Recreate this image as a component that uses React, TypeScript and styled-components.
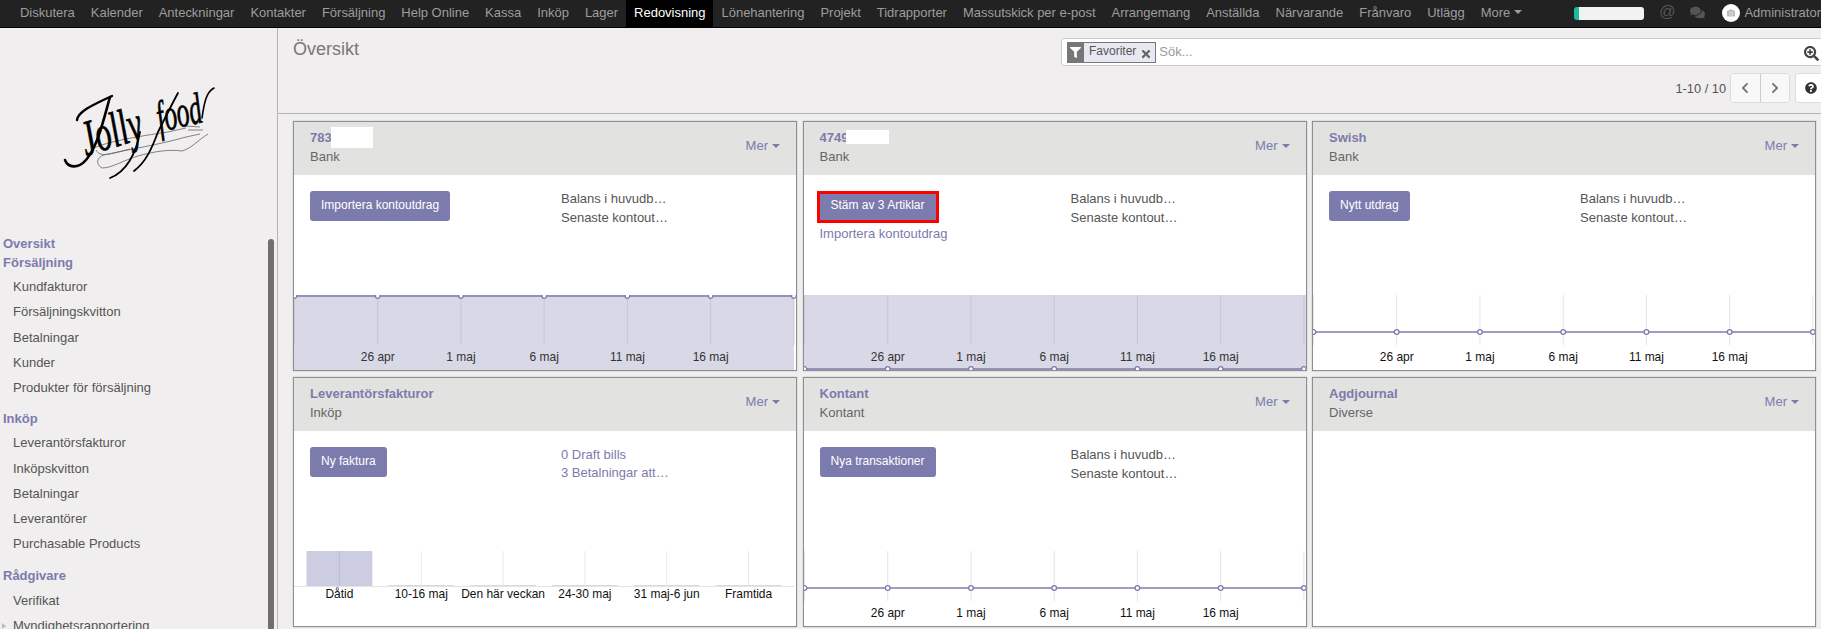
import React from "react";
import styled, { createGlobalStyle } from "styled-components";
import { FaComments, FaFilter, FaTimes, FaSearchPlus, FaChevronLeft, FaChevronRight, FaQuestionCircle, FaCamera } from "react-icons/fa";

const PURPLE = "#7c7bad";

const Global = createGlobalStyle`
  html, body { margin: 0; padding: 0; width: 1821px; height: 629px; overflow: hidden; background: #f0eeee; }
  body { font-family: "Liberation Sans", Arial, sans-serif; font-size: 13px; color: #4c4c4c; }
  * { box-sizing: border-box; }
`;

const Page = styled.div`
  width: 1821px;
  height: 629px;
  display: flex;
  flex-direction: column;
  overflow: hidden;
`;

const TopBar = styled.nav`
  flex: 0 0 28px;
  display: flex;
  align-items: stretch;
  padding-left: 12px;
  background: #222;
  border-bottom: 1px solid #000;
`;

const NavItem = styled.div<{ $active?: boolean }>`
  display: flex;
  align-items: center;
  padding: 0 8px 3px;
  white-space: nowrap;
  letter-spacing: -0.015px;
  color: ${(p) => (p.$active ? "#fff" : "#9d9d9d")};
  background: ${(p) => (p.$active ? "#000" : "transparent")};
`;

const Caret = styled.span<{ $color: string }>`
  display: inline-block;
  margin-left: 4px;
  vertical-align: 2px;
  border-top: 4px solid ${(p) => p.$color};
  border-left: 4px solid transparent;
  border-right: 4px solid transparent;
`;

const NavRight = styled.div`
  margin-left: auto;
  display: flex;
  align-items: center;
  padding-bottom: 3px;
  color: #9d9d9d;
  white-space: nowrap;
`;

const Progress = styled.div`
  width: 70px;
  height: 13px;
  margin-top: 3px;
  border-radius: 3px;
  overflow: hidden;
  background: #f2f2f2;
  border-left: 5px solid #1abc9c;
`;

const AtSign = styled.span`
  margin-left: 15px;
  font-size: 16px;
  color: #555;
`;

const Chat = styled.span`
  display: flex;
  margin-left: 15px;
  font-size: 15px;
  color: #555;
`;

const Avatar = styled.span`
  width: 18px;
  height: 18px;
  margin-left: 17px;
  margin-right: 4px;
  margin-top: 2px;
  border-radius: 50%;
  background: #fff;
  display: flex;
  align-items: center;
  justify-content: center;
  font-size: 8px;
  color: #bbb;
`;

const Main = styled.div`
  flex: 1;
  min-height: 0;
  display: flex;
`;

const Sidebar = styled.aside`
  position: relative;
  flex: 0 0 278px;
  border-right: 1px solid #b5b5b5;
  background: #f0eeee;
  overflow: hidden;
`;

const LogoBox = styled.div`
  height: 205px;
  padding: 42px 0 0 40px;
`;

const ScrollThumb = styled.div`
  position: absolute;
  left: 268px;
  top: 211px;
  bottom: -10px;
  width: 6px;
  border-radius: 3px 3px 0 0;
  background: #6f6f6f;
`;

const MenuGroup = styled.div<{ $gap?: number }>`
  height: 20px;
  line-height: 20px;
  margin-top: ${(p) => p.$gap ?? 0}px;
  padding-left: 3px;
  font-weight: bold;
  color: ${PURPLE};
`;

const MenuList = styled.div<{ $lead?: number }>`
  margin-top: ${(p) => p.$lead ?? 2}px;
`;

const MenuItem = styled.div<{ $arrow?: boolean }>`
  position: relative;
  height: 25.25px;
  line-height: 25.25px;
  padding-left: 13px;
  color: #555;
  white-space: nowrap;
  &::before {
    content: "";
    display: ${(p) => (p.$arrow ? "block" : "none")};
    position: absolute;
    left: 2px;
    top: 10px;
    border-left: 4px solid #bbb;
    border-top: 3px solid transparent;
    border-bottom: 3px solid transparent;
  }
`;

const Content = styled.main`
  flex: 1;
  min-width: 0;
  display: flex;
  flex-direction: column;
`;

const ControlPanel = styled.header`
  flex: 0 0 86px;
  display: flex;
  padding: 10px 0 0 15px;
  border-bottom: 1px solid #b5b5b5;
`;

const PageTitle = styled.h1`
  flex: 0 0 768px;
  margin: 0;
  font-size: 18px;
  font-weight: normal;
  line-height: 22px;
  color: #777;
`;

const PanelTools = styled.div`
  flex: 0 0 766px;
`;

const SearchBox = styled.div`
  height: 28px;
  display: flex;
  align-items: center;
  padding: 0 7px 0 5px;
  background: #fff;
  border: 1px solid #ccc;
  border-radius: 3px 0 0 3px;
`;

const Facet = styled.div`
  display: flex;
  height: 21px;
  border: 1px solid #777;
  background: #e8e8f2;
  font-size: 12px;
  color: #555;
`;

const FacetIcon = styled.span`
  width: 17px;
  margin: -1px 0 -1px -1px;
  display: flex;
  align-items: center;
  justify-content: center;
  background: #777;
  color: #fff;
  font-size: 11px;
`;

const FacetLabel = styled.span`
  padding: 1px 0 0 5px;
  line-height: 14px;
`;

const FacetClose = styled.span`
  display: flex;
  align-items: center;
  padding: 3px 3px 0 4px;
  font-size: 12px;
  color: #666;
`;

const SearchHint = styled.span`
  flex: 1;
  padding: 0 0 2px 3px;
  color: #999;
`;

const SearchGlyph = styled.span`
  display: flex;
  margin-top: 3px;
  font-size: 15px;
  color: #444;
`;

const PagerRow = styled.div`
  display: flex;
  justify-content: flex-end;
  align-items: center;
  margin-top: 7px;
  height: 30px;
`;

const PagerText = styled.span`
  margin-right: 4px;
  font-size: 12.8px;
  color: #555;
`;

const PagerGroup = styled.div`
  display: flex;
  height: 30px;
  width: 60px;
  border: 1px solid #ddd;
  border-radius: 3px;
  background: #f8f8f8;
`;

const PagerButton = styled.span`
  flex: 1;
  display: flex;
  align-items: center;
  justify-content: center;
  font-size: 12px;
  color: #777;
  & + & {
    border-left: 1px solid #ccc;
  }
`;

const HelpButton = styled.span`
  width: 32px;
  height: 30px;
  margin-left: 5px;
  display: flex;
  align-items: center;
  justify-content: center;
  font-size: 12px;
  color: #333;
  background: #fff;
  border: 1px solid #ddd;
  border-radius: 3px;
`;

const Board = styled.div`
  flex: 1;
  min-height: 0;
  display: grid;
  grid-template-columns: repeat(3, 1fr);
  grid-auto-rows: 250px;
  column-gap: 5.5px;
  row-gap: 6px;
  padding: 7px 5px 0 15px;
`;

const Card = styled.section`
  display: flex;
  flex-direction: column;
  min-width: 0;
  background: #fff;
  border: 1px solid #8f8f8f;
  box-shadow: 0 0 1px #999;
`;

const CardHead = styled.div`
  flex: 0 0 53px;
  display: flex;
  align-items: center;
  justify-content: space-between;
  padding: 0 16px;
  background: #e2e2e0;
`;

const HeadText = styled.div`
  position: relative;
  line-height: 19px;
  margin-top: -3px;
`;

const CardTitle = styled.div`
  font-weight: bold;
  color: ${PURPLE};
`;

const CardKind = styled.div`
  color: #666;
`;

const Redact = styled.span<{ $left: number; $top: number; $w: number; $h: number }>`
  position: absolute;
  left: ${(p) => p.$left}px;
  top: ${(p) => p.$top}px;
  width: ${(p) => p.$w}px;
  height: ${(p) => p.$h}px;
  background: #fff;
`;

const MoreLink = styled.div`
  color: ${PURPLE};
  margin-top: -7px;
`;

const CardBody = styled.div`
  flex: 1;
  min-height: 0;
  display: grid;
  grid-template-columns: 1fr 1fr;
`;

const Actions = styled.div`
  padding: 16px 16px 0;
`;

const Stats = styled.div<{ $links?: boolean }>`
  padding: ${(p) => (p.$links ? 15 : 14)}px 16px 0;
  line-height: ${(p) => (p.$links ? 18 : 19)}px;
`;

const Stat = styled.div<{ $link?: boolean }>`
  white-space: nowrap;
  color: ${(p) => (p.$link ? PURPLE : "#555")};
`;

const ActionButton = styled.div<{ $flagged?: boolean }>`
  display: inline-block;
  height: ${(p) => (p.$flagged ? 32 : 30)}px;
  padding: 0 11px;
  line-height: ${(p) => (p.$flagged ? 22 : 28)}px;
  font-size: 12px;
  color: #fff;
  background: ${PURPLE};
  border-radius: ${(p) => (p.$flagged ? 0 : 3)}px;
  border: ${(p) => (p.$flagged ? "3px solid #f00" : "none")};
  margin-left: ${(p) => (p.$flagged ? -3 : 0)}px;
  white-space: nowrap;
`;

const ActionLink = styled.div`
  margin-top: 2px;
  line-height: 18px;
  color: ${PURPLE};
`;

const ChartSvg = styled.svg`
  flex: 0 0 75px;
  display: block;
  width: 100%;
  height: 75px;
  font-family: "Liberation Sans", Arial, sans-serif;
  font-size: 12px;
`;

const navLabels = ["Diskutera","Kalender","Anteckningar","Kontakter","Försäljning","Help Online","Kassa","Inköp","Lager","Redovisning","Lönehantering","Projekt","Tidrapporter","Massutskick per e-post","Arrangemang","Anställda","Närvarande","Frånvaro","Utlägg"];

const Logo = () => (
  <svg width="200" height="130" viewBox="0 0 200 130">
    <g fill="none" stroke="#666" strokeWidth="0.8">
      <path d="M168 64 C158 70 152 78 142 81 C128 79 112 82 98 86 C84 90 72 98 62 98 C55 94 57 87 64 85 C90 79 118 75 146 67 L160 64" />
      <path d="M148 60 L163 60 M146 56 L160 57" />
      <path d="M54 78 C66 72 100 66 128 62 L146 58 M56 80 C60 88 70 84 90 79" />
    </g>
    <g fill="none" stroke="#000" strokeLinecap="round">
      <path d="M37 50 C38 42 50 36 72 26" strokeWidth="2.4" />
      <path d="M70 27 C64 48 58 76 46 90 C38 99 28 98 25 90" strokeWidth="2.6" />
      <path d="M100 62 C96 84 86 102 70 108" strokeWidth="1.8" />
      <path d="M138 23 C132 34 124 50 118 62 C112 78 106 92 94 101" strokeWidth="1.8" />
      <path d="M162 48 C164 34 166 22 174 18" strokeWidth="1.6" />
    </g>
    <g fontFamily="'Liberation Serif', serif" fontStyle="italic" fill="#000" stroke="#000" strokeWidth="0.7">
      <text fontSize="50" transform="translate(46 86) rotate(-17) scale(0.64 1)">Jolly</text>
      <text fontSize="44" transform="translate(120 62) rotate(-13) scale(0.58 1)">food</text>
    </g>
  </svg>
);

const TICKS = [0, 1, 2, 3, 4, 5, 6];
const TICK_LABELS = ["26 apr", "1 maj", "6 maj", "11 maj", "16 maj"];
const STEP = 83.4;

const LineChart = ({ y, filled }: { y: number; filled?: boolean }) => (
  <ChartSvg viewBox="0 0 503 75" preserveAspectRatio="none">
    {filled && <rect x="0" y={Math.min(y, 0)} width="501" height="75" fill="#d8d8e6" />}
    {filled && y > 40 && <rect x="501" y="0" width="2" height="75" fill="#d8d8e6" />}
    {TICKS.map((i) => (
      <line key={i} x1={i * STEP + 0.5} x2={i * STEP + 0.5} y1="0" y2="50" stroke={filled ? "#c6c6d6" : "#e4e4e4"} />
    ))}
    <line x1="0" x2="503" y1={y} y2={y} stroke={PURPLE} strokeWidth="1.4" />
    {TICKS.map((i) => (
      <circle key={i} cx={i * STEP + 0.5} cy={y} r="2.3" fill="#fff" stroke={PURPLE} strokeWidth="1.3" />
    ))}
    {TICK_LABELS.map((t, i) => (
      <text key={t} x={(i + 1) * STEP + 0.5} y="66" textAnchor="middle" fill={filled ? "#333" : "#111"}>{t}</text>
    ))}
  </ChartSvg>
);

const BAR_LABELS = ["Dåtid", "10-16 maj", "Den här veckan", "24-30 maj", "31 maj-6 jun", "Framtida"];
const BarChart = () => (
  <ChartSvg viewBox="0 0 503 75" preserveAspectRatio="none">
    {BAR_LABELS.map((t, i) => {
      const cx = 45.5 + i * 82;
      return (
        <g key={t}>
          {i === 0 ? (
            <rect x={cx - 33} y="0" width="66" height="35" fill="#cccde0" />
          ) : (
            <rect x={cx - 33} y="34" width="66" height="1" fill="#d8d8e6" />
          )}
          <line x1={cx} x2={cx} y1="0" y2="35" stroke={i === 0 ? "#bcbdd0" : "#e8e8e8"} />
          <text x={cx} y="47" textAnchor="middle" fill="#111">{t}</text>
        </g>
      );
    })}
    <line x1="0" x2="501" y1="35.5" y2="35.5" stroke="#e4e4e4" />
  </ChartSvg>
);

const More = () => (
  <MoreLink>
    Mer<Caret $color={PURPLE} />
  </MoreLink>
);

const BalanceStats = () => (
  <Stats>
    <Stat>Balans i huvudb…</Stat>
    <Stat>Senaste kontout…</Stat>
  </Stats>
);

export default function App() {
  return (
    <Page>
      <Global />
      <TopBar>
        {navLabels.map((l) => (
          <NavItem key={l} $active={l === "Redovisning"}>{l}</NavItem>
        ))}
        <NavItem>
          More<Caret $color="#9d9d9d" />
        </NavItem>
        <NavRight>
          <Progress />
          <AtSign>@</AtSign>
          <Chat><FaComments /></Chat>
          <Avatar><FaCamera /></Avatar>
          Administrator
        </NavRight>
      </TopBar>
      <Main>
        <Sidebar>
          <LogoBox><Logo /></LogoBox>
          <ScrollThumb />
          <MenuGroup $gap={1}>Oversikt</MenuGroup>
          <MenuGroup $gap={-1}>Försäljning</MenuGroup>
          <MenuList $lead={1}>
            <MenuItem>Kundfakturor</MenuItem>
            <MenuItem>Försäljningskvitton</MenuItem>
            <MenuItem>Betalningar</MenuItem>
            <MenuItem>Kunder</MenuItem>
            <MenuItem>Produkter för försäljning</MenuItem>
          </MenuList>
          <MenuGroup $gap={9}>Inköp</MenuGroup>
          <MenuList $lead={1}>
            <MenuItem>Leverantörsfakturor</MenuItem>
            <MenuItem>Inköpskvitton</MenuItem>
            <MenuItem>Betalningar</MenuItem>
            <MenuItem>Leverantörer</MenuItem>
            <MenuItem>Purchasable Products</MenuItem>
          </MenuList>
          <MenuGroup $gap={9}>Rådgivare</MenuGroup>
          <MenuList $lead={2}>
            <MenuItem>Verifikat</MenuItem>
            <MenuItem $arrow>Myndighetsrapportering</MenuItem>
          </MenuList>
        </Sidebar>
        <Content>
          <ControlPanel>
            <PageTitle>Översikt</PageTitle>
            <PanelTools>
              <SearchBox>
                <Facet>
                  <FacetIcon><FaFilter /></FacetIcon>
                  <FacetLabel>Favoriter</FacetLabel>
                  <FacetClose><FaTimes /></FacetClose>
                </Facet>
                <SearchHint>Sök...</SearchHint>
                <SearchGlyph><FaSearchPlus /></SearchGlyph>
              </SearchBox>
              <PagerRow>
                <PagerText>1-10 / 10</PagerText>
                <PagerGroup>
                  <PagerButton><FaChevronLeft /></PagerButton>
                  <PagerButton><FaChevronRight /></PagerButton>
                </PagerGroup>
                <HelpButton><FaQuestionCircle /></HelpButton>
              </PagerRow>
            </PanelTools>
          </ControlPanel>
          <Board>
            <Card>
              <CardHead>
                <HeadText>
                  <CardTitle>783</CardTitle>
                  <Redact $left={21} $top={-1} $w={42} $h={21} />
                  <CardKind>Bank</CardKind>
                </HeadText>
                <More />
              </CardHead>
              <CardBody>
                <Actions><ActionButton>Importera kontoutdrag</ActionButton></Actions>
                <BalanceStats />
              </CardBody>
              <LineChart y={1} filled />
            </Card>
            <Card>
              <CardHead>
                <HeadText>
                  <CardTitle>4749</CardTitle>
                  <Redact $left={26} $top={2} $w={43} $h={14} />
                  <CardKind>Bank</CardKind>
                </HeadText>
                <More />
              </CardHead>
              <CardBody>
                <Actions>
                  <ActionButton $flagged>Stäm av 3 Artiklar</ActionButton>
                  <ActionLink>Importera kontoutdrag</ActionLink>
                </Actions>
                <BalanceStats />
              </CardBody>
              <LineChart y={74} filled />
            </Card>
            <Card>
              <CardHead>
                <HeadText>
                  <CardTitle>Swish</CardTitle>
                  <CardKind>Bank</CardKind>
                </HeadText>
                <More />
              </CardHead>
              <CardBody>
                <Actions><ActionButton>Nytt utdrag</ActionButton></Actions>
                <BalanceStats />
              </CardBody>
              <LineChart y={37} />
            </Card>
            <Card>
              <CardHead>
                <HeadText>
                  <CardTitle>Leverantörsfakturor</CardTitle>
                  <CardKind>Inköp</CardKind>
                </HeadText>
                <More />
              </CardHead>
              <CardBody>
                <Actions><ActionButton>Ny faktura</ActionButton></Actions>
                <Stats $links>
                  <Stat $link>0 Draft bills</Stat>
                  <Stat $link>3 Betalningar att…</Stat>
                </Stats>
              </CardBody>
              <BarChart />
            </Card>
            <Card>
              <CardHead>
                <HeadText>
                  <CardTitle>Kontant</CardTitle>
                  <CardKind>Kontant</CardKind>
                </HeadText>
                <More />
              </CardHead>
              <CardBody>
                <Actions><ActionButton>Nya transaktioner</ActionButton></Actions>
                <BalanceStats />
              </CardBody>
              <LineChart y={37} />
            </Card>
            <Card>
              <CardHead>
                <HeadText>
                  <CardTitle>Agdjournal</CardTitle>
                  <CardKind>Diverse</CardKind>
                </HeadText>
                <More />
              </CardHead>
            </Card>
          </Board>
        </Content>
      </Main>
    </Page>
  );
}
